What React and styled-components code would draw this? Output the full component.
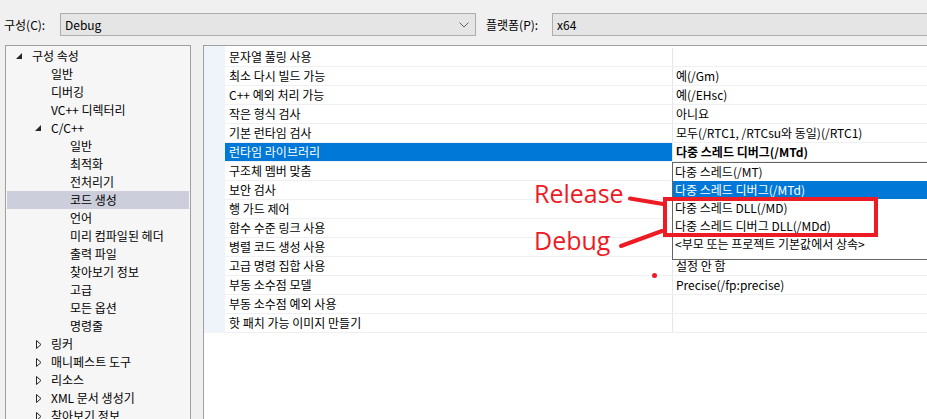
import React from "react";
import styled, { createGlobalStyle } from "styled-components";

const Global = createGlobalStyle`
  html, body { margin: 0; padding: 0; }
  body {
    background: #f0f0f0;
    overflow: hidden;
    font-family: "Noto Sans CJK KR", "Noto Sans", sans-serif;
    font-size: 12px;
    color: #000;
  }
`;

const Page = styled.div`
  position: relative;
  width: 927px;
  height: 419px;
  overflow: hidden;
  background: #f0f0f0;
`;

const TopBar = styled.div`
  display: flex;
  align-items: flex-start;
  height: 45px;
  box-sizing: border-box;
  padding: 13px 0 0 4px;
`;

const Label = styled.div`
  width: ${(p) => p.$w}px;
  margin-left: ${(p) => p.$ml || 0}px;
  height: 23px;
  line-height: 23px;
  white-space: nowrap;
  flex-shrink: 0;
`;

const Combo = styled.div`
  position: relative;
  width: ${(p) => p.$w}px;
  height: 23px;
  box-sizing: border-box;
  border: 1px solid #adadad;
  background: #e5e5e5;
  padding-left: 4px;
  line-height: 21px;
  flex-shrink: 0;
`;

const Chevron = styled.svg`
  position: absolute;
  right: 6px;
  top: 8px;
`;

const Main = styled.div`
  display: flex;
  align-items: stretch;
  height: 374px;
  padding-left: 5px;
  gap: 12px;
`;

const Tree = styled.div`
  width: 186px;
  flex-shrink: 0;
  box-sizing: border-box;
  border: 1px solid #a0a0a0;
  border-bottom: none;
  background: #f6f6f6;
  padding: 1px 1px 0;
  overflow: hidden;
`;

const TreeRow = styled.div`
  display: flex;
  align-items: center;
  height: 18px;
  padding-left: ${(p) => 6 + p.$level * 19}px;
  background: ${(p) => (p.$sel ? "#cccedb" : "transparent")};
  white-space: nowrap;
  line-height: 18px;
`;

const Arrow = styled.span`
  width: 19px;
  height: 18px;
  flex-shrink: 0;
  display: flex;
  align-items: center;
  padding-left: ${(p) => (p.$open ? 3 : 4)}px;
  box-sizing: border-box;
`;

const Grid = styled.div`
  width: 760px;
  flex-shrink: 0;
  box-sizing: border-box;
  border-top: 1px solid #a0a0a0;
  border-left: 1px solid #a0a0a0;
  background: #fff;
`;

const GridBody = styled.div`
  display: flex;
  align-items: stretch;
`;

const Gutter = styled.div`
  width: 21px;
  flex-shrink: 0;
  background: #eff3fa;
`;

const Rows = styled.div`
  position: relative;
  flex: 1;
  padding-top: 2px;
`;

const Row = styled.div`
  display: flex;
  height: 19px;
  box-sizing: border-box;
  border-bottom: 1px solid #eef0f3;
`;

const NameCell = styled.div`
  width: 447px;
  flex-shrink: 0;
  box-sizing: border-box;
  padding-left: 4px;
  line-height: 18px;
  white-space: nowrap;
  background: ${(p) => (p.$sel ? "#0078d7" : "transparent")};
  color: ${(p) => (p.$sel ? "#fff" : "#000")};
`;

const ValueCell = styled.div`
  flex: 1;
  box-sizing: border-box;
  border-left: 1px solid #e4e6ea;
  padding-left: 3px;
  line-height: 18px;
  white-space: nowrap;
  font-weight: ${(p) => (p.$bold ? 700 : 400)};
`;

const DropList = styled.div`
  position: absolute;
  left: 447px;
  top: ${2 + 19 * 6}px;
  width: 300px;
  box-sizing: border-box;
  border: 1px solid #646464;
  background: #fff;
  padding-bottom: 6px;
`;

const DropItem = styled.div`
  height: 18px;
  line-height: 18px;
  padding-left: 2px;
  white-space: nowrap;
  background: ${(p) => (p.$sel ? "#0078d7" : "transparent")};
  color: ${(p) => (p.$sel ? "#fff" : "#000")};
`;

const Overlay = styled.svg`
  position: absolute;
  left: 0;
  top: 0;
  pointer-events: none;
`;

const Note = styled.div`
  position: absolute;
  left: 534px;
  top: ${(p) => p.$top}px;
  font-family: "Open Sans", "Liberation Sans", sans-serif;
  font-size: 25px;
  line-height: 25px;
  color: #ed1c24;
  white-space: nowrap;
`;

const treeItems = [
  { l: 0, t: "구성 속성", a: "open" },
  { l: 1, t: "일반" },
  { l: 1, t: "디버깅" },
  { l: 1, t: "VC++ 디렉터리" },
  { l: 1, t: "C/C++", a: "open" },
  { l: 2, t: "일반" },
  { l: 2, t: "최적화" },
  { l: 2, t: "전처리기" },
  { l: 2, t: "코드 생성", sel: true },
  { l: 2, t: "언어" },
  { l: 2, t: "미리 컴파일된 헤더" },
  { l: 2, t: "출력 파일" },
  { l: 2, t: "찾아보기 정보" },
  { l: 2, t: "고급" },
  { l: 2, t: "모든 옵션" },
  { l: 2, t: "명령줄" },
  { l: 1, t: "링커", a: "closed" },
  { l: 1, t: "매니페스트 도구", a: "closed" },
  { l: 1, t: "리소스", a: "closed" },
  { l: 1, t: "XML 문서 생성기", a: "closed" },
  { l: 1, t: "찾아보기 정보", a: "closed" },
];

const props = [
  ["문자열 풀링 사용", ""],
  ["최소 다시 빌드 가능", "예(/Gm)"],
  ["C++ 예외 처리 가능", "예(/EHsc)"],
  ["작은 형식 검사", "아니요"],
  ["기본 런타임 검사", "모두(/RTC1, /RTCsu와 동일)(/RTC1)"],
  ["런타임 라이브러리", "다중 스레드 디버그(/MTd)", true],
  ["구조체 멤버 맞춤", ""],
  ["보안 검사", ""],
  ["행 가드 제어", ""],
  ["함수 수준 링크 사용", ""],
  ["병렬 코드 생성 사용", ""],
  ["고급 명령 집합 사용", "설정 안 함"],
  ["부동 소수점 모델", "Precise(/fp:precise)"],
  ["부동 소수점 예외 사용", ""],
  ["핫 패치 가능 이미지 만들기", ""],
];

const options = [
  "다중 스레드(/MT)",
  "다중 스레드 디버그(/MTd)",
  "다중 스레드 DLL(/MD)",
  "다중 스레드 디버그 DLL(/MDd)",
  "<부모 또는 프로젝트 기본값에서 상속>",
];

function TreeArrow({ kind }) {
  if (kind === "open") {
    return (
      <svg width="7" height="7" viewBox="0 0 7 7">
        <polygon points="6,0 6,6 0,6" fill="#262626" />
      </svg>
    );
  }
  if (kind === "closed") {
    return (
      <svg width="6" height="9" viewBox="0 0 6 9">
        <polygon points="0.5,0.5 5,4.5 0.5,8.5" fill="none" stroke="#262626" strokeWidth="1" />
      </svg>
    );
  }
  return null;
}

export default function App() {
  return (
    <Page>
      <Global />
      <TopBar>
        <Label $w={56}>구성(C):</Label>
        <Combo $w={416}>
          Debug
          <Chevron width="10" height="6" viewBox="0 0 10 6">
            <polyline points="0.5,0.5 5,5 9.5,0.5" fill="none" stroke="#606060" strokeWidth="1" />
          </Chevron>
        </Combo>
        <Label $w={66} $ml={10}>플랫폼(P):</Label>
        <Combo $w={400}>x64</Combo>
      </TopBar>
      <Main>
        <Tree>
          {treeItems.map((it, i) => (
            <TreeRow key={i} $level={it.l} $sel={it.sel}>
              <Arrow $open={it.a === "open"}>
                <TreeArrow kind={it.a} />
              </Arrow>
              {it.t}
            </TreeRow>
          ))}
        </Tree>
        <Grid>
          <GridBody>
            <Gutter />
            <Rows>
              {props.map(([n, v, sel], i) => (
                <Row key={i}>
                  <NameCell $sel={sel}>{n}</NameCell>
                  <ValueCell $bold={sel}>{v}</ValueCell>
                </Row>
              ))}
              <DropList>
                {options.map((o, i) => (
                  <DropItem key={i} $sel={i === 1}>
                    {o}
                  </DropItem>
                ))}
              </DropList>
            </Rows>
          </GridBody>
        </Grid>
      </Main>
      <Overlay width="927" height="419" viewBox="0 0 927 419">
        <rect x="665" y="199" width="211" height="36" fill="none" stroke="#ed1c24" strokeWidth="4" />
        <line x1="630" y1="198.5" x2="663" y2="204" stroke="#ed1c24" strokeWidth="4" strokeLinecap="round" />
        <line x1="621" y1="246" x2="662" y2="231" stroke="#ed1c24" strokeWidth="4" strokeLinecap="round" />
        <circle cx="654.5" cy="275.5" r="2.5" fill="#ed1c24" />
      </Overlay>
      <Note $top={181}>Release</Note>
      <Note $top={228}>Debug</Note>
    </Page>
  );
}
